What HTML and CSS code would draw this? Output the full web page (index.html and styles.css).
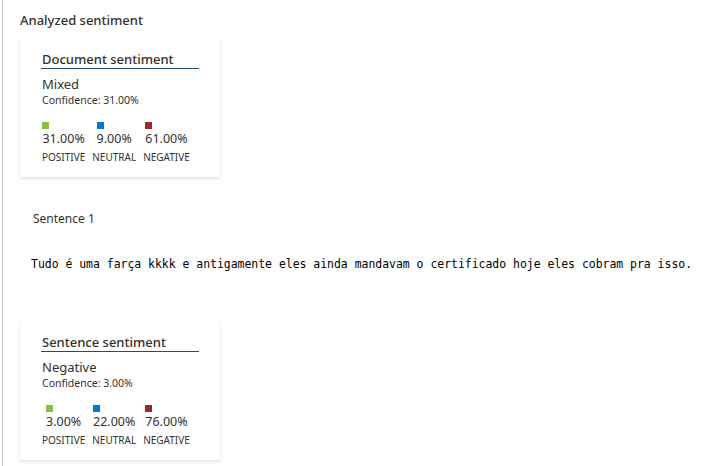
FILE: index.html
```html
<!DOCTYPE html>
<html>
<head>
<meta charset="utf-8">
<link rel="stylesheet" href="styles.css">
</head>
<body>
<div class="pane">
  <div class="heading">Analyzed sentiment</div>
  <div class="card">
    <div class="card-title">Document sentiment</div>
    <div class="label-main">Mixed</div>
    <div class="confidence">Confidence: 31.00%</div>
    <div class="scores">
      <div class="score">
        <div class="score-top"><span class="sq pos"></span><span class="pct">31.00%</span></div>
        <div class="cap">POSITIVE</div>
      </div>
      <div class="score">
        <div class="score-top"><span class="sq neu"></span><span class="pct">9.00%</span></div>
        <div class="cap">NEUTRAL</div>
      </div>
      <div class="score">
        <div class="score-top"><span class="sq neg"></span><span class="pct">61.00%</span></div>
        <div class="cap">NEGATIVE</div>
      </div>
    </div>
  </div>
  <div class="sentence-label">Sentence 1</div>
  <div class="sentence-text">Tudo é uma farça kkkk e antigamente eles ainda mandavam o certificado hoje eles cobram pra isso.</div>
  <div class="card card-second">
    <div class="card-title">Sentence sentiment</div>
    <div class="label-main">Negative</div>
    <div class="confidence">Confidence: 3.00%</div>
    <div class="scores">
      <div class="score">
        <div class="score-top"><span class="sq pos"></span><span class="pct">3.00%</span></div>
        <div class="cap">POSITIVE</div>
      </div>
      <div class="score">
        <div class="score-top"><span class="sq neu"></span><span class="pct">22.00%</span></div>
        <div class="cap">NEUTRAL</div>
      </div>
      <div class="score">
        <div class="score-top"><span class="sq neg"></span><span class="pct">76.00%</span></div>
        <div class="cap">NEGATIVE</div>
      </div>
    </div>
  </div>
</div>
</body>
</html>
```
FILE: styles.css
```css
html, body {
  margin: 0;
  padding: 0;
  background: #ffffff;
}
body {
  font-family: "Noto Sans", "Open Sans", sans-serif;
  color: #323130;
  height: 466px;
  overflow: hidden;
}
.pane {
  margin-left: 2px;
  border-left: 1px solid #c8c8c8;
  height: 466px;
  padding-left: 17px;
  padding-top: 10px;
  box-sizing: border-box;
}
.heading {
  font-size: 13px;
  line-height: 20px;
  font-weight: 500;
  color: #323130;
}
.card {
  margin-top: 10px;
  width: 200px;
  height: 137px;
  box-sizing: border-box;
  padding: 10px 21px 0 22px;
  background: #fff;
  box-shadow: 0 1.6px 3.6px rgba(0,0,0,0.13), 0 0.3px 0.9px rgba(0,0,0,0.11);
}
.card-title {
  font-size: 13px;
  line-height: 18px;
  font-weight: 500;
  border-bottom: 1px solid #1f4e6e;
  padding-bottom: 0;
  margin-left: -1px;
  padding-left: 1px;
}
.label-main {
  margin-top: 7px;
  font-size: 13px;
  line-height: 17px;
}
.confidence {
  font-size: 10.5px;
  line-height: 14px;
}
.scores {
  display: flex;
  gap: 7px;
  margin-top: 15px;
}
.score {
  display: flex;
  flex-direction: column;
  align-items: center;
}
.score-top {
  display: flex;
  flex-direction: column;
  align-items: flex-start;
}
.sq {
  display: block;
  width: 7px;
  height: 7px;
}
.sq.pos { background: #8cbd3f; }
.sq.neu { background: #0078d4; }
.sq.neg { background: #a4262c; }
.pct {
  font-size: 12.5px;
  line-height: 17px;
  margin-top: 1px;
}
.cap {
  font-size: 10px;
  line-height: 14px;
  margin-top: 3px;
  color: #323130;
}
.sentence-label {
  margin-top: 34px;
  padding-left: 13px;
  font-size: 12px;
  line-height: 16px;
}
.sentence-text {
  margin-top: 29px;
  padding-left: 11px;
  font-family: "DejaVu Sans Mono", "Liberation Mono", monospace;
  font-size: 11.45px;
  line-height: 16px;
  white-space: nowrap;
  color: #000;
}
.card-second {
  margin-top: 51px;
}
```
